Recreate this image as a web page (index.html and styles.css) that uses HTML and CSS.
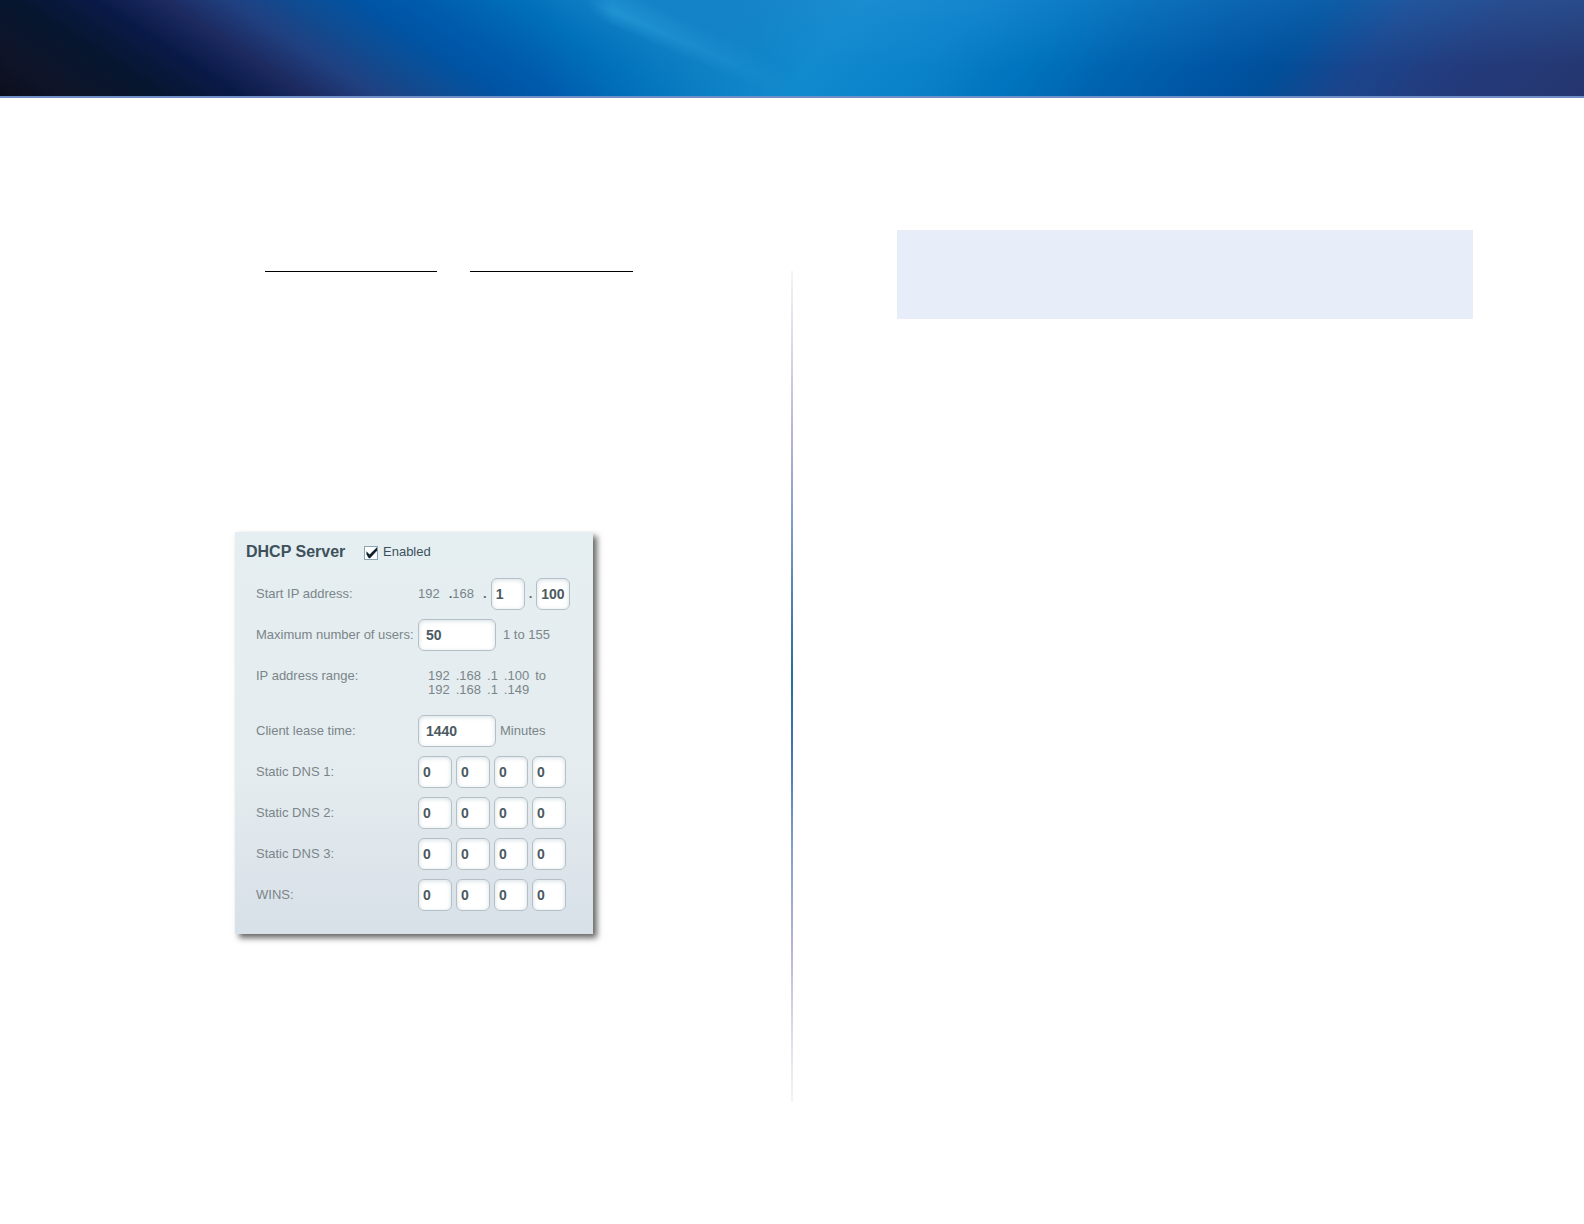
FILE: index.html
```html
<!DOCTYPE html>
<html lang="en">
<head>
    <meta charset="UTF-8">
    <meta name="viewport" content="width=device-width, initial-scale=1.0">
    <title>DHCP Server</title>
    <link rel="stylesheet" href="styles.css">
</head>
<body>
    <header class="banner"></header>

    <main class="columns">
        <section class="column-left">
            <div class="rules">
                <span class="rule rule-long"></span>
                <span class="rule"></span>
            </div>

            <form class="panel">
                <div class="panel-header">
                    <h2>DHCP Server</h2>
                    <input type="checkbox" id="enabled" name="enabled" checked>
                    <label for="enabled">Enabled</label>
                </div>

                <div class="row">
                    <label for="startIp3">Start IP address:</label>
                    <div class="fields start-ip">
                        <span>192</span>
                        <span><b>.</b>168</span>
                        <b>.</b>
                        <input type="text" id="startIp3" value="1">
                        <b>.</b>
                        <input type="text" id="startIp4" value="100" aria-label="Start IP address, last part">
                    </div>
                </div>

                <div class="row">
                    <label for="maxUsers">Maximum number of users:</label>
                    <div class="fields">
                        <input type="text" class="wide" id="maxUsers" value="50">
                        <span class="unit">1 to 155</span>
                    </div>
                </div>

                <div class="row range-row">
                    <span>IP address range:</span>
                    <div class="range">
                        <div class="address"><span>192</span><span>.168</span><span>.1</span><span>.100</span><span>to</span></div>
                        <div class="address"><span>192</span><span>.168</span><span>.1</span><span>.149</span></div>
                    </div>
                </div>

                <div class="row">
                    <label for="leaseTime">Client lease time:</label>
                    <div class="fields">
                        <input type="text" class="wide" id="leaseTime" value="1440">
                        <span>Minutes</span>
                    </div>
                </div>

                <div class="row">
                    <label for="dns1">Static DNS 1:</label>
                    <div class="fields">
                        <input type="text" id="dns1" value="0">
                        <input type="text" value="0" aria-label="Static DNS 1, part 2">
                        <input type="text" value="0" aria-label="Static DNS 1, part 3">
                        <input type="text" value="0" aria-label="Static DNS 1, part 4">
                    </div>
                </div>

                <div class="row">
                    <label for="dns2">Static DNS 2:</label>
                    <div class="fields">
                        <input type="text" id="dns2" value="0">
                        <input type="text" value="0" aria-label="Static DNS 2, part 2">
                        <input type="text" value="0" aria-label="Static DNS 2, part 3">
                        <input type="text" value="0" aria-label="Static DNS 2, part 4">
                    </div>
                </div>

                <div class="row">
                    <label for="dns3">Static DNS 3:</label>
                    <div class="fields">
                        <input type="text" id="dns3" value="0">
                        <input type="text" value="0" aria-label="Static DNS 3, part 2">
                        <input type="text" value="0" aria-label="Static DNS 3, part 3">
                        <input type="text" value="0" aria-label="Static DNS 3, part 4">
                    </div>
                </div>

                <div class="row">
                    <label for="wins">WINS:</label>
                    <div class="fields">
                        <input type="text" id="wins" value="0">
                        <input type="text" value="0" aria-label="WINS, part 2">
                        <input type="text" value="0" aria-label="WINS, part 3">
                        <input type="text" value="0" aria-label="WINS, part 4">
                    </div>
                </div>
            </form>
        </section>

        <div class="divider"></div>

        <section class="column-right">
            <div class="note"></div>
        </section>
    </main>
</body>
</html>
```
FILE: styles.css
```css
* {
    box-sizing: border-box;
}

body {
    margin: 0;
    background-color: #fff;
    font-family: "Liberation Sans", Arial, sans-serif;
    font-size: 13px;
    line-height: 14px;
    color: #7b8589;
}

.banner {
    position: relative;
    height: 98px;
    border-bottom: 2px solid #6d8fc4;
    background:
        linear-gradient(to bottom, rgba(60, 150, 220, 0.2), rgba(0, 110, 180, 0) 70%),
        linear-gradient(130deg,
            #0076be 36%, #0c80c4 45%, #128ace 52%, #0a82ca 59%, #0074be 65%,
            #0064b0 70%, #0056a4 76%, #004f9a 80%, #1b458c 85%,
            #233b7c 91%, #25366f 100%);
}

/* dark left half, leaning the other way */
.banner::before {
    content: "";
    position: absolute;
    left: 0;
    top: 0;
    bottom: 0;
    width: 50%;
    background: linear-gradient(33deg,
        #0b0e1c 0%, #0f1428 7%, #06162f 17%, #0a1a48 26%, #1c2a60 33%,
        #204080 40%, #0f4c92 47%, #0054a4 54%, #005cae 61%, #0070ba 71%,
        #1a86c8 83%);
    mask-image: linear-gradient(to right, #000 68%, transparent);
}

/* light streak */
.banner::after {
    content: "";
    position: absolute;
    left: 37%;
    top: 0;
    bottom: 0;
    width: 14%;
    background: linear-gradient(to top right,
        transparent 42%, rgba(50, 170, 225, 0.5) 50%, transparent 64%);
    mask-image: linear-gradient(to right, transparent, #000 12%, transparent 95%);
}

.columns {
    display: grid;
    grid-template-columns: 1fr 2px 1fr;
    padding: 132px 0 121px;
}

.column-left {
    padding: 41px 0 168px 235px;
}

.rules {
    display: flex;
    gap: 33px;
    padding-left: 30px;
}

.rule {
    width: 163px;
    border-top: 1px solid #000;
}

.rule-long {
    width: 172px;
}

.divider {
    margin-top: 41px;
    background: linear-gradient(to bottom,
        #f4f4f4 0%, #d9d9e6 9%, #bdb4d8 19%, #86a0cb 29%, #3f78aa 43%,
        #256f99 49%, #3f74ad 57%, #86a0cd 70%, #b4b2d8 81%, #dcd9e6 91%, #f4f4f4 100%);
}

.column-right {
    padding: 0 111px 0 104px;
}

.note {
    height: 89px;
    background-color: #e8eef9;
}

.panel {
    width: 358px;
    margin-top: 260px;
    padding: 11px 10px 23px 11px;
    background: linear-gradient(to bottom, #e5eef0 0%, #e4ecef 60%, #d8e0e8 100%);
    box-shadow: 4px 4px 6px rgba(0, 0, 0, 0.6);
}

.panel-header {
    display: flex;
    align-items: center;
    height: 18px;
    margin-bottom: 17px;
    color: #3d515c;
}

.panel-header h2 {
    width: 118px;
    margin: 0;
    font-size: 16px;
}

.row {
    display: grid;
    grid-template-columns: 162px 1fr;
    align-items: center;
    margin-bottom: 9px;
    padding-left: 10px;
}

.row:last-child {
    margin-bottom: 0;
}

.fields {
    display: flex;
    align-items: center;
    gap: 4px;
}

.start-ip span {
    margin-right: 5px;
}

.start-ip b {
    color: #5d6a70;
}

.unit {
    margin-left: 3px;
}

.range-row {
    align-items: start;
    margin: 18px 0;
}

.range {
    padding-left: 10px;
}

.address {
    display: flex;
    gap: 6px;
}

input[type="text"] {
    width: 34px;
    height: 32px;
    padding: 0 4px;
    border: 1px solid #b5bfc6;
    border-radius: 6px;
    background-color: #fff;
    box-shadow: inset 0 1px 4px rgba(130, 160, 175, 0.35);
    font-family: inherit;
    font-size: 14px;
    font-weight: bold;
    color: #4b5a61;
}

input[type="text"].wide {
    width: 78px;
    padding: 0 7px;
}

input[type="checkbox"] {
    appearance: none;
    width: 14px;
    height: 14px;
    margin: 2px 5px 0 0;
    border: 1px solid #8aa5b5;
    background-color: #fff;
}

/* tick mark */
input[type="checkbox"]:checked::before {
    content: "";
    display: block;
    height: 12px;
    background-color: #14222a;
    clip-path: polygon(12% 36%, 38% 62%, 100% 2%, 100% 32%, 42% 94%, 32% 94%, 12% 62%);
}
```
